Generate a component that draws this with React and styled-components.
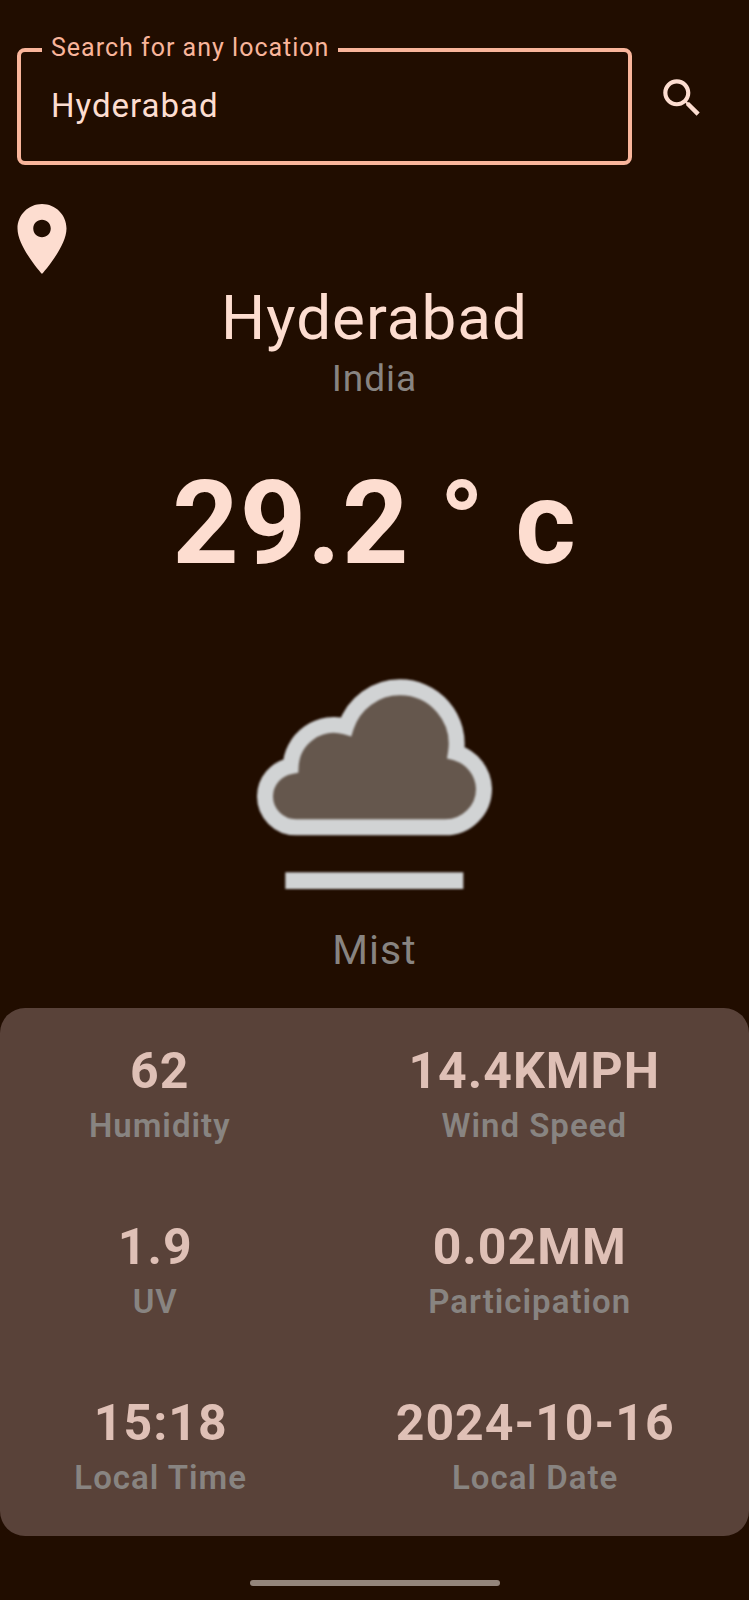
import React, { useState } from "react";
import styled, { createGlobalStyle, ThemeProvider } from "styled-components";

const theme = {
  background: "#210d00",
  onBackground: "#fdddd0",
  primary: "#f9b59b",
  card: "#594239",
  onCard: "#dfc0b6",
  muted: "#888481",
  handle: "#94857b",
};

const GlobalStyle = createGlobalStyle`
  *, *::before, *::after { box-sizing: border-box; }
  body {
    margin: 0;
    background: ${theme.background};
    color: ${theme.onBackground};
    font-family: Roboto, "Liberation Sans", sans-serif;
    letter-spacing: 1px;
  }
`;

const Screen = styled.div`
  display: flex;
  flex-direction: column;
  min-height: 100vh;
`;

const SearchBar = styled.form`
  display: flex;
  align-items: center;
  padding: 31px 17px 32px;
`;

const Field = styled.fieldset`
  flex: 1;
  min-width: 0;
  margin: 0;
  padding: 0 21px;
  border: 4px solid ${(p) => p.theme.primary};
  border-radius: 8px;
`;

const FieldLegend = styled.legend`
  padding: 0 9px 4px;
  font-size: 25px;
  line-height: 34px;
  color: ${(p) => p.theme.primary};
`;

const FieldInput = styled.input`
  display: block;
  width: 100%;
  height: 92px;
  padding: 16px 9px 36px;
  border: 0;
  outline: 0;
  background: transparent;
  color: inherit;
  font: inherit;
  font-size: 33px;
  line-height: 40px;
  letter-spacing: inherit;
`;

const IconButton = styled.button`
  display: grid;
  place-items: center;
  width: 100px;
  height: 100px;
  padding: 0;
  border: 0;
  border-radius: 50%;
  background: transparent;
  color: inherit;
  cursor: pointer;
`;

const Icon = styled.svg`
  display: block;
  width: ${(p) => p.$size}px;
  height: ${(p) => p.$size}px;
  fill: currentColor;
`;

const Current = styled.main`
  display: flex;
  flex-direction: column;
  align-items: center;
  text-align: center;
`;

const City = styled.h1`
  margin: 0;
  font-size: 62px;
  font-weight: 400;
  line-height: 74px;
`;

const Country = styled.p`
  margin: 0 0 51px;
  font-size: 37px;
  line-height: 48px;
  color: ${(p) => p.theme.muted};
`;

const Temperature = styled.p`
  margin: 0;
  font-size: 116px;
  font-weight: 700;
  line-height: 138px;
`;

const ConditionImage = styled.svg`
  display: block;
  width: 333px;
  height: 333px;
  filter: blur(1px);
`;

const Condition = styled.p`
  margin: 0 0 33px;
  font-size: 41px;
  line-height: 50px;
  color: ${(p) => p.theme.muted};
`;

const Card = styled.section`
  border-radius: 25px;
  background: ${(p) => p.theme.card};
`;

const StatRow = styled.dl`
  display: flex;
  justify-content: space-around;
  margin: 0;
  padding: 33px 0;
`;

const Stat = styled.div`
  display: flex;
  flex-direction: column-reverse;
  text-align: center;
`;

const StatValue = styled.dd`
  margin: 0;
  font-size: 50px;
  font-weight: 700;
  line-height: 60px;
  color: ${(p) => p.theme.onCard};
`;

const StatLabel = styled.dt`
  font-size: 33px;
  font-weight: 600;
  line-height: 50px;
  color: ${(p) => p.theme.muted};
`;

const NavHandle = styled.div`
  align-self: center;
  width: 250px;
  height: 6px;
  margin: 44px 0 14px;
  border-radius: 3px;
  background: ${(p) => p.theme.handle};
`;

const rows = [
  [
    { label: "Humidity", value: "62" },
    { label: "Wind Speed", value: "14.4KMPH" },
  ],
  [
    { label: "UV", value: "1.9" },
    { label: "Participation", value: "0.02MM" },
  ],
  [
    { label: "Local Time", value: "15:18" },
    { label: "Local Date", value: "2024-10-16" },
  ],
];

export default function App() {
  const [query, setQuery] = useState("Hyderabad");

  return (
    <ThemeProvider theme={theme}>
      <GlobalStyle />
      <Screen>
        <SearchBar onSubmit={(e) => e.preventDefault()}>
          <Field>
            <FieldLegend>
              <label htmlFor="location">Search for any location</label>
            </FieldLegend>
            <FieldInput
              id="location"
              type="text"
              value={query}
              onChange={(e) => setQuery(e.target.value)}
            />
          </Field>
          <IconButton type="submit" aria-label="Search">
            <Icon $size={50} viewBox="0 0 24 24" aria-hidden="true">
              <path d="M15.5 14h-.79l-.28-.27C15.41 12.59 16 11.11 16 9.5 16 5.91 13.09 3 9.5 3S3 5.91 3 9.5 5.91 16 9.5 16c1.61 0 3.09-.59 4.23-1.57l.27.28v.79l5 4.99L20.49 19l-4.99-5zm-6 0C7.01 14 5 11.99 5 9.5S7.01 5 9.5 5 14 7.01 14 9.5 11.99 14 9.5 14z" />
            </Icon>
          </IconButton>
        </SearchBar>

        <Icon $size={84} viewBox="0 0 24 24" aria-hidden="true">
          <path d="M12 2C8.13 2 5 5.13 5 9c0 5.25 7 13 7 13s7-7.75 7-13c0-3.87-3.13-7-7-7zm0 9.5c-1.38 0-2.5-1.12-2.5-2.5s1.12-2.5 2.5-2.5 2.5 1.12 2.5 2.5-1.12 2.5-2.5 2.5z" />
        </Icon>

        <Current>
          <City>Hyderabad</City>
          <Country>India</Country>
          <Temperature>29.2 ° c</Temperature>
          <ConditionImage viewBox="-96 -204 999 999" aria-hidden="true">
            <path
              d="M168 502 A93 93 0 0 1 75 409 A93 93 0 0 1 152 318 A130 130 0 0 1 318 200 A170 170 0 0 1 480 82 A170 170 0 0 1 648 278 A116 116 0 0 1 732 386 A116 116 0 0 1 616 502 Z"
              fill="#65574d"
              stroke="#d1d3d4"
              strokeWidth="48"
            />
            <rect x="136" y="637" width="534" height="50" fill="#d1d3d4" />
          </ConditionImage>
          <Condition>Mist</Condition>
        </Current>

        <Card aria-label="Details">
          {rows.map((row) => (
            <StatRow key={row[0].label}>
              {row.map((stat) => (
                <Stat key={stat.label}>
                  <StatLabel>{stat.label}</StatLabel>
                  <StatValue>{stat.value}</StatValue>
                </Stat>
              ))}
            </StatRow>
          ))}
        </Card>

        <NavHandle />
      </Screen>
    </ThemeProvider>
  );
}
